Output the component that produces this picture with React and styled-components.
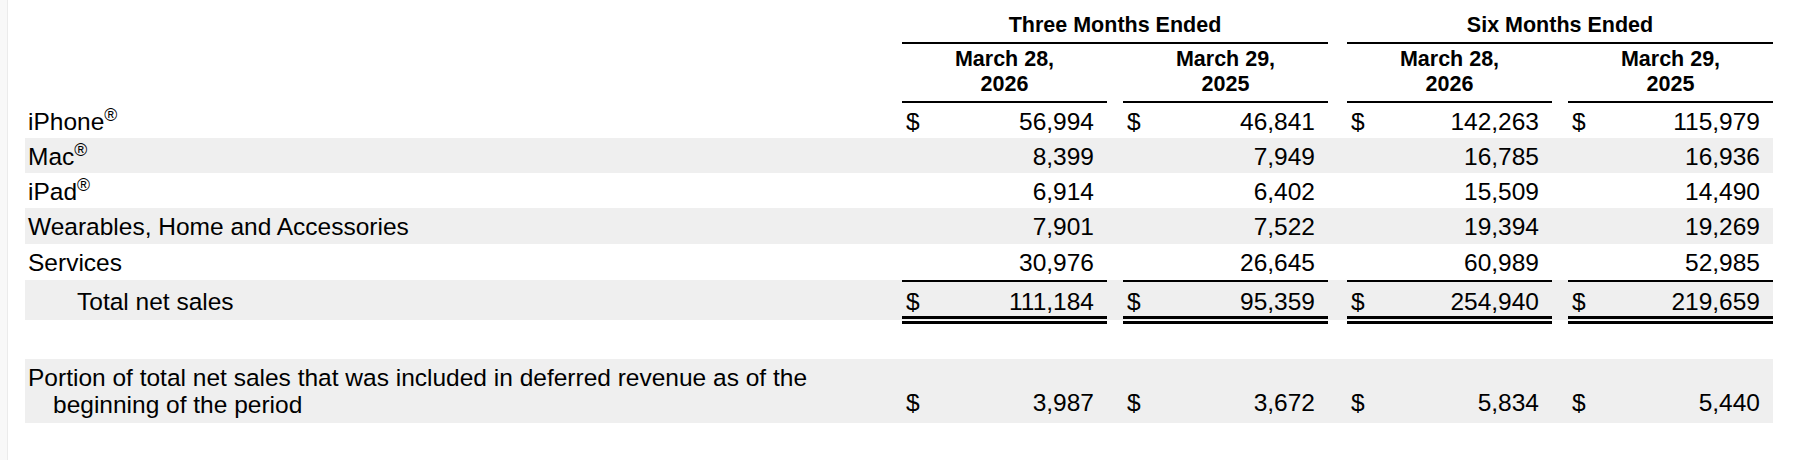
import React from "react";
import styled, { createGlobalStyle, css } from "styled-components";

const GRID = "877px 205px 16px 205px 19px 205px 16px 205px";
const SHADE = "#efefef";

const GlobalStyle = createGlobalStyle`
  *, *::before, *::after { box-sizing: border-box; }
  html, body { margin: 0; padding: 0; background: #fff; }
  body {
    font-family: "Liberation Sans", Arial, Helvetica, sans-serif;
    color: #000;
  }
`;

const Page = styled.div`
  display: flex;
  width: 1796px;
  min-height: 460px;
`;

const Gutter = styled.div`
  flex: none;
  width: 8px;
  background: #f8f8f8;
  border-right: 1px solid #ebebeb;
`;

const Table = styled.div`
  flex: none;
  width: 1748px;
  margin-left: 17px;
  display: flex;
  flex-direction: column;
`;

const Row = styled.div`
  display: grid;
  grid-template-columns: ${GRID};
  height: ${(p) => p.$h}px;
  background: ${(p) => (p.$shade ? SHADE : "transparent")};
`;

const TotalRow = styled(Row)`
  background: linear-gradient(${SHADE} 0 40px, transparent 40px);
`;

const GroupHead = styled.div`
  grid-column: ${(p) => p.$span};
  align-self: end;
  height: 44px;
  padding-top: 13px;
  font-size: 21.5px;
  font-weight: 700;
  line-height: 24px;
  text-align: center;
  border-bottom: 2px solid #000;
`;

const DateHead = styled.div`
  grid-column: ${(p) => p.$col};
  height: 59px;
  padding-top: 3px;
  font-size: 21.5px;
  font-weight: 700;
  line-height: 25px;
  text-align: center;
  border-bottom: 2px solid #000;
`;

const Label = styled.div`
  display: flex;
  align-items: center;
  padding: ${(p) => (p.$total ? "7px 0 8px" : "2px 0 0")};
  padding-left: ${(p) => 3 + (p.$indent || 0)}px;
  font-size: 24.5px;
  white-space: nowrap;
`;

const WrapLabel = styled.div`
  padding: 5px 0 0 28px;
  text-indent: -25px;
  font-size: 24.5px;
  line-height: 27px;
`;

const Reg = styled.sup`
  font-size: 0.72em;
  line-height: 0;
  vertical-align: 0.5em;
`;

const Money = styled.div`
  display: flex;
  justify-content: space-between;
  align-items: ${(p) => (p.$bottom ? "flex-end" : "center")};
  padding: ${(p) => (p.$bottom ? "0 13px 6px 4px" : "2px 13px 0 4px")};
  font-size: 24.5px;
  ${(p) =>
    p.$total &&
    css`
      padding: 5px 13px 0 4px;
      border-top: 2px solid #000;
      border-bottom: 8px double #000;
    `}
`;

const Spacer = styled.div``;

const rows = [
  { label: "iPhone", reg: true, dollar: true, vals: ["56,994", "46,841", "142,263", "115,979"] },
  { label: "Mac", reg: true, shade: true, vals: ["8,399", "7,949", "16,785", "16,936"] },
  { label: "iPad", reg: true, vals: ["6,914", "6,402", "15,509", "14,490"] },
  { label: "Wearables, Home and Accessories", shade: true, vals: ["7,901", "7,522", "19,394", "19,269"] },
  { label: "Services", vals: ["30,976", "26,645", "60,989", "52,985"] },
];
const heights = [35, 35, 35, 36, 36];

const totals = ["111,184", "95,359", "254,940", "219,659"];
const portion = ["3,987", "3,672", "5,834", "5,440"];

function Cells({ vals, dollar, total, bottom }) {
  return vals.map((v, i) => (
    <React.Fragment key={i}>
      {i > 0 && <Spacer />}
      <Money $total={total} $bottom={bottom}>
        <span>{dollar ? "$" : ""}</span>
        <span>{v}</span>
      </Money>
    </React.Fragment>
  ));
}

export default function App() {
  return (
    <>
      <GlobalStyle />
      <Page>
        <Gutter />
        <Table>
          <Row $h={44}>
            <GroupHead $span="2 / 5">Three Months Ended</GroupHead>
            <GroupHead $span="6 / 9">Six Months Ended</GroupHead>
          </Row>
          <Row $h={59}>
            <DateHead $col="2">March 28,<br />2026</DateHead>
            <DateHead $col="4">March 29,<br />2025</DateHead>
            <DateHead $col="6">March 28,<br />2026</DateHead>
            <DateHead $col="8">March 29,<br />2025</DateHead>
          </Row>
          {rows.map((r, i) => (
            <Row key={r.label} $h={heights[i]} $shade={r.shade}>
              <Label>
                <span>
                  {r.label}
                  {r.reg && <Reg>®</Reg>}
                </span>
              </Label>
              <Cells vals={r.vals} dollar={r.dollar} />
            </Row>
          ))}
          <TotalRow $h={44}>
            <Label $indent={49} $total>Total net sales</Label>
            <Cells vals={totals} dollar total />
          </TotalRow>
          <Row $h={35} />
          <Row $h={64} $shade>
            <WrapLabel>
              Portion of total net sales that was included in deferred revenue as of the
              <br />
              beginning of the period
            </WrapLabel>
            <Cells vals={portion} dollar bottom />
          </Row>
        </Table>
      </Page>
    </>
  );
}
